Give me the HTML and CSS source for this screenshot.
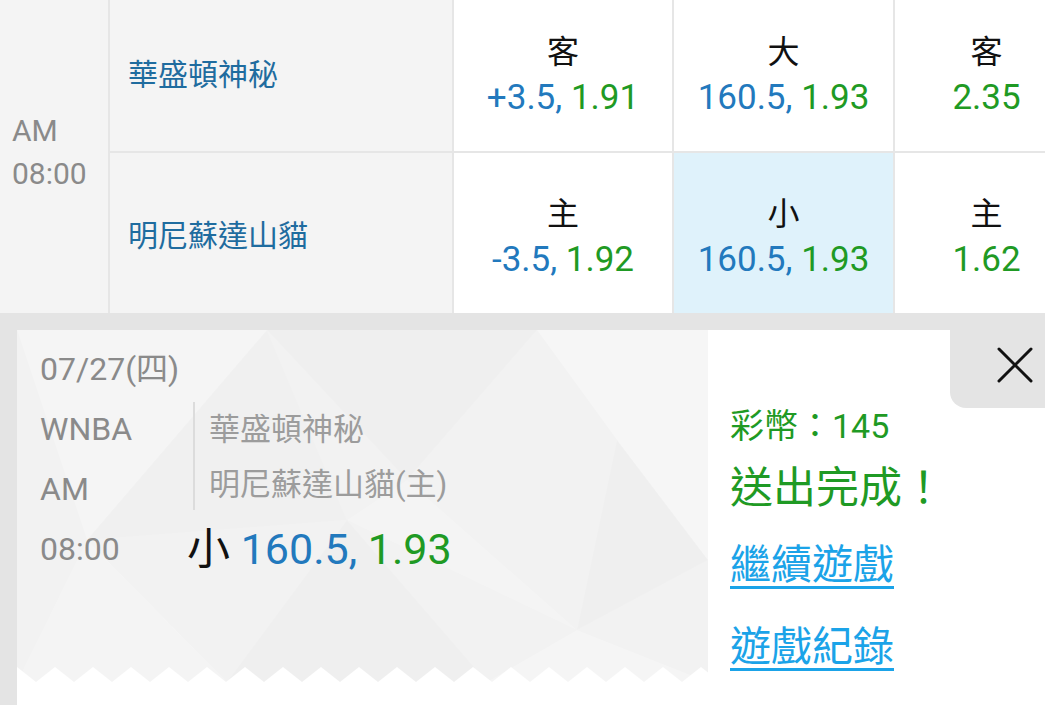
FILE: index.html
```html
<!DOCTYPE html>
<html lang="zh-Hant">
<head>
    <meta charset="UTF-8">
    <title>投注完成</title>
    <link rel="stylesheet" href="styles.css">
</head>
<body>
<div class="page">
    <!--賠率表-->
    <div class="odds">
        <div class="cell time"><span>AM</span><span>08:00</span></div>
        <div class="cell team top">華盛頓神秘</div>
        <div class="cell bet top">
            <span class="side">客</span>
            <span class="line"><span class="blue">+3.5,</span> <span class="green">1.91</span></span>
        </div>
        <div class="cell bet top">
            <span class="side">大</span>
            <span class="line"><span class="blue">160.5,</span> <span class="green">1.93</span></span>
        </div>
        <div class="cell bet top">
            <span class="side">客</span>
            <span class="line"><span class="green">2.35</span></span>
        </div>
        <div class="cell team">明尼蘇達山貓</div>
        <div class="cell bet">
            <span class="side">主</span>
            <span class="line"><span class="blue">-3.5,</span> <span class="green">1.92</span></span>
        </div>
        <div class="cell bet current">
            <span class="side">小</span>
            <span class="line"><span class="blue">160.5,</span> <span class="green">1.93</span></span>
        </div>
        <div class="cell bet">
            <span class="side">主</span>
            <span class="line"><span class="green">1.62</span></span>
        </div>
    </div>

    <!--注單彈窗-->
    <div class="panel">
        <div class="card">
            <div class="ticket">
                <svg class="facets" width="691" height="352" viewBox="0 0 691 352">
                    <defs>
                        <pattern id="teeth" width="38" height="15" patternUnits="userSpaceOnUse" x="0" y="337">
                            <polygon points="0,0 19,15 0,15" fill="#fff"/>
                            <polygon points="38,0 38,15 19,15" fill="#fff"/>
                        </pattern>
                    </defs>
                    <polygon points="0,0 250,0 70,210" fill="#fff" opacity="0.25"/>
                    <polygon points="250,0 520,0 390,150" fill="#000" opacity="0.01"/>
                    <polygon points="520,0 691,0 691,230 600,110" fill="#fff" opacity="0.3"/>
                    <polygon points="70,210 0,352 210,352" fill="#fff" opacity="0.2"/>
                    <polygon points="210,352 330,190 470,352" fill="#000" opacity="0.012"/>
                    <polygon points="390,150 560,300 330,190" fill="#fff" opacity="0.2"/>
                    <polygon points="600,110 691,230 560,300" fill="#000" opacity="0.01"/>
                    <polygon points="470,352 560,300 691,352" fill="#fff" opacity="0.25"/>
                    <polygon points="70,210 250,0 330,190" fill="#000" opacity="0.006"/>
                    <rect x="0" y="337" width="691" height="15" fill="url(#teeth)"/>
                </svg>
                <div class="ticket-body">
                    <div class="date">07/27(四)</div>
                    <div class="match">
                        <div class="labels">
                            <div>WNBA</div>
                            <div>AM</div>
                            <div>08:00</div>
                        </div>
                        <div class="detail">
                            <div class="teams">
                                <div>華盛頓神秘</div>
                                <div>明尼蘇達山貓(主)</div>
                            </div>
                            <div class="pick">小 <span class="blue">160.5,</span> <span class="green">1.93</span></div>
                        </div>
                    </div>
                </div>
            </div>
            <div class="result">
                <div class="coins">彩幣：145</div>
                <div class="done">送出完成！</div>
                <a class="link" href="#">繼續遊戲</a>
                <a class="link" href="#">遊戲紀錄</a>
            </div>
            <button class="close" type="button">
                <svg width="36" height="36" viewBox="0 0 36 36">
                    <path d="M2 2 L34 34 M34 2 L2 34" stroke="#111" stroke-width="3" stroke-linecap="round" fill="none"/>
                </svg>
            </button>
        </div>
    </div>
</div>
</body>
</html>
```

FILE: styles.css
```css
* {
    padding: 0;
    margin: 0;
    box-sizing: border-box;
}

html, body {
    width: 100%;
    height: 100%;
    overflow: hidden;
    background: #fff;
}

body {
    font-family: Roboto, "Noto Sans CJK TC", sans-serif;
    color: #111;
}

.page {
    width: 1080px;
    height: 705px;
    display: flex;
    flex-direction: column;
}

/* 賠率表 */
.odds {
    display: grid;
    grid-template-columns: 110px 344px 220px 221px 185px;
    grid-template-rows: 153px 160px;
}

.cell {
    border-right: 2px solid #e6e6e6;
    background: #fff;
}

.cell.top {
    border-bottom: 2px solid #e6e6e6;
}

.time {
    grid-row: span 2;
    background: #f4f4f4;
    display: flex;
    flex-direction: column;
    justify-content: center;
    padding: 0 0 10px 12px;
    font-size: 30px;
    line-height: 43px;
    color: #8a8a8a;
}

.team {
    background: #f4f4f4;
    display: flex;
    align-items: center;
    padding-left: 18px;
    font-size: 30px;
    color: #1f6c9f;
}

.team.top {
    padding-bottom: 8px;
}

.bet {
    display: flex;
    flex-direction: column;
    align-items: center;
    justify-content: center;
    padding-bottom: 2px;
}

.bet:not(.top) {
    padding: 8px 0 0;
}

.bet .side {
    font-size: 32px;
    line-height: 45px;
    color: #111;
}

.bet .line {
    font-size: 35px;
    line-height: 45px;
}

.bet.current {
    background: #dff2fb;
}

.blue {
    color: #2279bd;
}

.green {
    color: #1f9a24;
}

/* 彈窗 */
.panel {
    flex: 1;
    background: #e4e4e4;
    padding: 17px 0 0 17px;
    display: flex;
}

.card {
    flex: 1;
    background: #fff;
    display: flex;
    position: relative;
    align-items: flex-start;
}

.ticket {
    width: 691px;
    height: 352px;
    position: relative;
    background: #f2f2f2;
}

.facets {
    position: absolute;
    left: 0;
    top: 0;
    display: block;
}

.ticket-body {
    position: relative;
    padding: 9px 0 0 23px;
    color: #8a8a8a;
    font-size: 32px;
    line-height: 60px;
}

.match {
    display: flex;
}

.labels {
    width: 147px;
}

.teams {
    height: 108px;
    margin: 3px 0 9px 6px;
    padding-left: 14px;
    border-left: 2px solid #dcdcdc;
    color: #9c9c9c;
    font-size: 31px;
    line-height: 55px;
}

.pick {
    font-size: 43px;
    line-height: 60px;
    color: #111;
    white-space: nowrap;
}

.result {
    flex: 1;
    padding: 74px 0 0 22px;
}

.coins {
    font-size: 34px;
    line-height: 44px;
    color: #1f9a24;
}

.done {
    margin-top: 12px;
    font-size: 43px;
    line-height: 56px;
    color: #1f9a24;
}

.link {
    display: block;
    width: max-content;
    margin-top: 10px;
    font-size: 41px;
    line-height: 78px;
    color: #1ba3e8;
    text-decoration: underline;
    text-decoration-thickness: 3px;
    text-underline-offset: 7px;
}

.link + .link {
    margin-top: 4px;
}

.close {
    position: absolute;
    top: 0;
    right: 0;
    width: 130px;
    height: 78px;
    border: 0;
    background: #e4e4e4;
    border-bottom-left-radius: 16px;
    display: flex;
    align-items: center;
    justify-content: center;
    padding-bottom: 8px;
    cursor: pointer;
}
```
